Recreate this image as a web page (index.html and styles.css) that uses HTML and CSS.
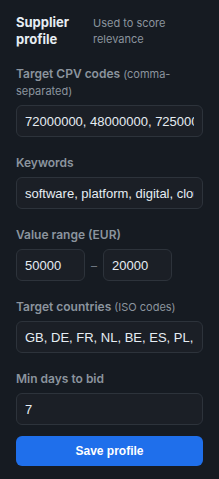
FILE: index.html
```html
<!DOCTYPE html>
<html lang="en">
<head>
    <meta charset="UTF-8" />
    <meta name="viewport" content="width=device-width, initial-scale=1.0" />
    <title>Supplier profile</title>
    <link rel="stylesheet" href="styles.css">
</head>
<body>

    <!-- Supplier profile panel -->
    <aside class="profile-panel">
        <div class="panel-header">
            <h3 class="panel-title">Supplier profile</h3>
            <span class="panel-sub">Used to score relevance</span>
        </div>

        <div class="field">
            <label for="cpv">Target CPV codes <span class="hint">(comma-separated)</span></label>
            <input type="text" id="cpv" value="72000000, 48000000, 72500000, 72200000" />
        </div>

        <div class="field">
            <label for="keywords">Keywords</label>
            <input type="text" id="keywords" value="software, platform, digital, cloud" />
        </div>

        <div class="field">
            <label>Value range (EUR)</label>
            <div class="range-row">
                <input type="text" class="range-input" value="50000" />
                <span class="range-dash">–</span>
                <input type="text" class="range-input" value="20000" />
            </div>
        </div>

        <div class="field">
            <label for="countries">Target countries <span class="hint">(ISO codes)</span></label>
            <input type="text" id="countries" value="GB, DE, FR, NL, BE, ES, PL, IT" />
        </div>

        <div class="field last">
            <label for="days">Min days to bid</label>
            <input type="text" id="days" value="7" />
        </div>

        <button class="save-btn">Save profile</button>
    </aside>

</body>
</html>
```

FILE: styles.css
```css
body {
    font-family: Inter, 'Noto Sans', sans-serif;
    background-color: #161b22;
    margin: 0;
    min-height: 100vh;
}

.profile-panel {
    padding: 14px 16px 12px 16px;
    display: flex;
    flex-direction: column;
}

.panel-header {
    display: flex;
    gap: 12px;
    align-items: flex-start;
    margin-bottom: 17px;
}

.panel-title {
    margin: 0;
    width: 65px;
    flex: 0 0 auto;
    color: #e6edf3;
    font-size: 13px;
    font-weight: 700;
    line-height: 17px;
}

.panel-sub {
    color: #8b949e;
    font-size: 11px;
    line-height: 16px;
    margin-top: 1px;
}

.field {
    display: flex;
    flex-direction: column;
    margin-bottom: 17px;
}

    .field.last {
        margin-bottom: 11px;
    }

label {
    color: #8b949e;
    font-size: 12px;
    font-weight: 600;
    line-height: 17px;
    margin-bottom: 6px;
}

    label .hint {
        font-size: 11px;
        font-weight: 400;
        line-height: 1;
    }

input {
    box-sizing: border-box;
    width: 100%;
    height: 32px;
    padding: 0 8px;
    border-radius: 6px;
    border: 1px solid #2d333b;
    background-color: #1b1f26;
    color: #e6edf3;
    font-family: 'Liberation Sans', Arial, sans-serif;
    font-size: 13px;
}

    input:focus {
        outline: none;
        border-color: #1f6feb;
    }

.range-row {
    display: flex;
    align-items: center;
    gap: 6px;
}

.range-input {
    width: 69px;
}

.range-dash {
    color: #6e7681;
    font-size: 12px;
}

.save-btn {
    width: 100%;
    height: 30px;
    background-color: #1f6feb;
    color: white;
    border: none;
    border-radius: 6px;
    font-family: 'Liberation Sans', Arial, sans-serif;
    font-size: 12px;
    font-weight: 700;
    cursor: pointer;
}

    .save-btn:hover {
        background-color: #388bfd;
    }
```
